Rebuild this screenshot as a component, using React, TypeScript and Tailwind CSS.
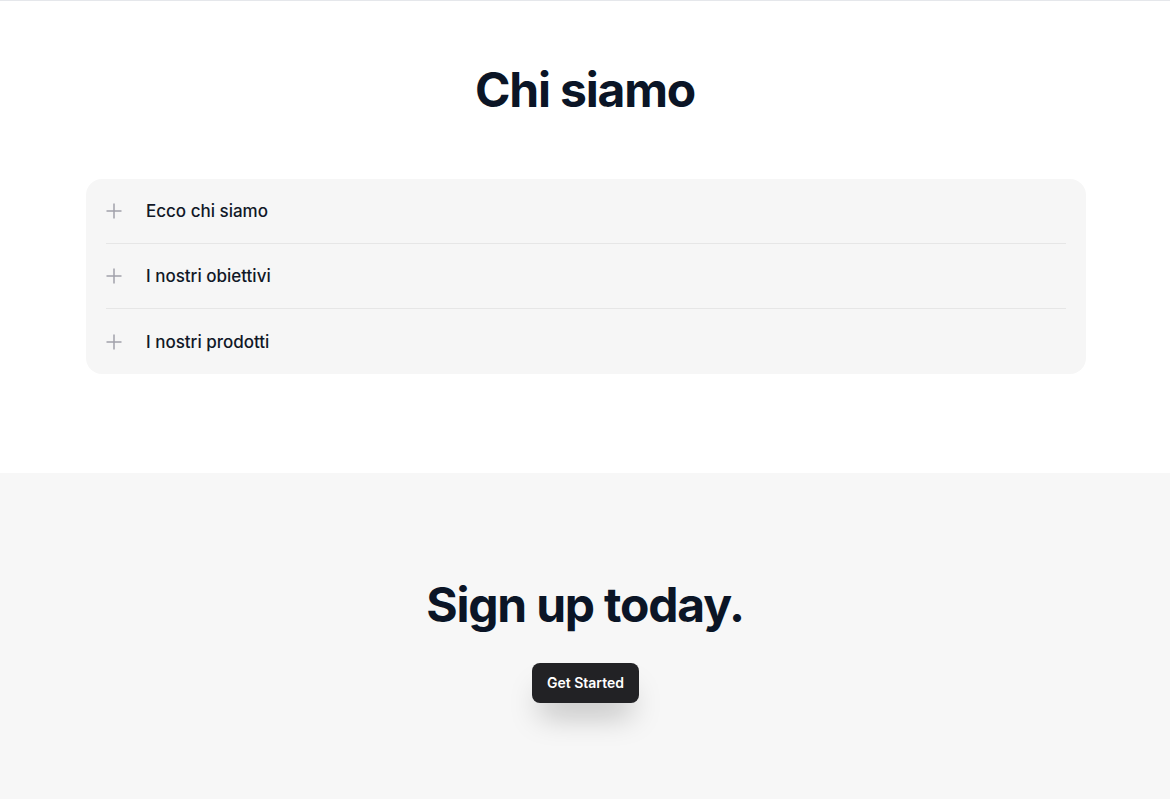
const items = ['Ecco chi siamo', 'I nostri obiettivi', 'I nostri prodotti'];

function PlusIcon() {
  return (
    <svg width="16" height="16" viewBox="0 0 16 16" fill="none" className="flex-shrink-0">
      <path d="M8 0.5v15M0.5 8h15" stroke="#a1a1aa" strokeWidth="1.5" />
    </svg>
  );
}

export default function App() {
  return (
    <div className="min-h-screen bg-white font-['Inter',sans-serif] border-t border-[#e5e7eb]">
      {/* About */}
      <section className="h-[472px] pt-[58px] flex flex-col items-center">
        <h2 className="text-5xl leading-[62px] font-bold tracking-tight text-[#0b1526]">
          Chi siamo
        </h2>
        <div className="mt-[58px] ml-[2px] w-[1000px] rounded-2xl bg-[#f6f6f6] px-5">
          {items.map((label, i) => (
            <div
              key={label}
              className={`flex items-center h-[65px] gap-6 ${
                i < items.length - 1 ? 'border-b border-[#e6e6e6]' : ''
              }`}
            >
              <PlusIcon />
              <span className="text-[17px] font-medium text-[#111827] pt-[2px]">{label}</span>
            </div>
          ))}
        </div>
      </section>

      {/* CTA */}
      <section className="h-[327px] bg-[#f7f7f7] pt-[101px] flex flex-col items-center">
        <h2 className="text-5xl leading-[62px] font-bold tracking-tight text-[#0b1526]">
          Sign up today.
        </h2>
        <button className="mt-[27px] ml-[1px] h-10 px-[15px] rounded-lg bg-[#222225] text-white text-sm font-semibold shadow-[0_20px_30px_-8px_rgba(0,0,0,0.25)]">
          Get Started
        </button>
      </section>
    </div>
  );
}
